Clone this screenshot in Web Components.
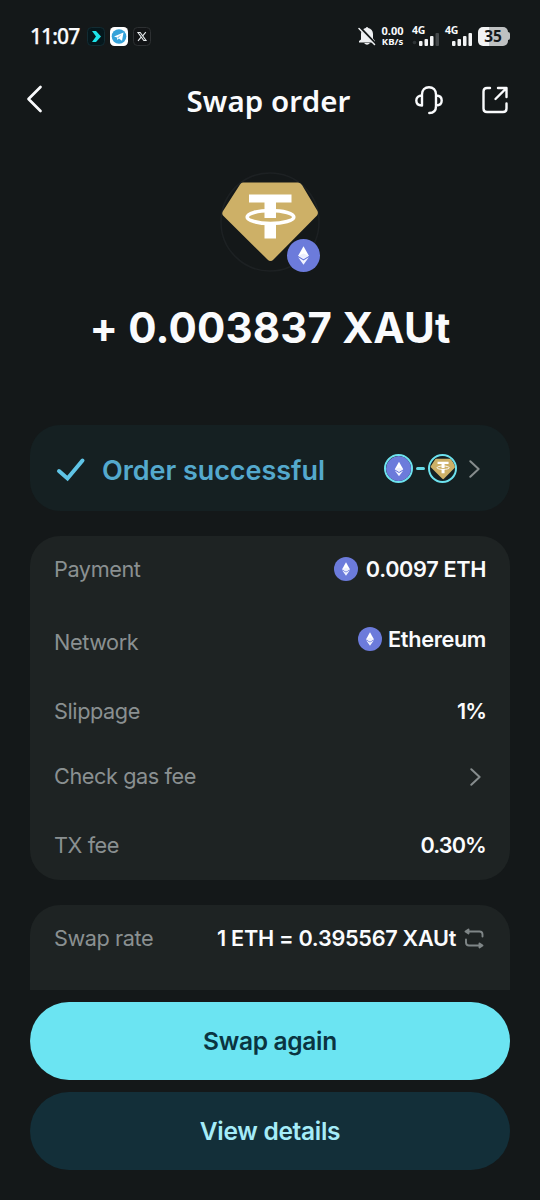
<!DOCTYPE html>
<html lang="en">
<head>
<meta charset="utf-8">
<title>Swap order</title>
<style>
html,body{margin:0;background:#141819}
body{width:540px;height:1200px;overflow:hidden;font-family:Inter,"Liberation Sans",sans-serif;color:#fafbfd}
</style>
</head>
<body>
<swap-page></swap-page>
<script>
const define = (name, html) => customElements.define(name, class extends HTMLElement {
  constructor() {
    super();
    const t = document.createElement('template');
    t.innerHTML = html;
    this.attachShadow({mode: 'open'}).append(t.content.cloneNode(true));
  }
});

define('eth-coin', `<style>:host{display:block;width:24px;height:24px;flex:none}svg{display:block;width:100%;height:100%}</style>
<svg viewBox="0 0 24 24"><circle cx="12" cy="12" r="12" fill="#6c7bdb"/><path d="M12 5.2 8.1 12.2 12 14.6 15.9 12.2Z" fill="#fff"/><path d="M8.1 13.3 12 15.6 15.9 13.3 12 18.8Z" fill="#f1f3ff"/><path d="M8.1 12.2 12 10.6 15.9 12.2 12 14.6Z" fill="#eceefd"/></svg>`);

define('gold-coin', `<style>:host{display:block;width:100px;height:100px;flex:none}svg{display:block;width:100%;height:100%}</style>
<svg viewBox="0 0 100 100"><circle cx="50" cy="50" r="49" fill="none" stroke="#1d2123" stroke-width="1.5"/>
<path d="M23 10.5H78Q80.500 10.500 82 13L97.500 39Q98.500 41.500 97 43.500L53.500 87.500Q50.500 90.500 47.500 87.500L3 43.500Q1.500 41.500 3 39L20 12.500Q21.300 10.500 23 10.500Z" fill="#cdb067"/>
<path d="M29 22.500H71.500V30.500H56V46H44.500V30.500H29Z" fill="#fff"/><path d="M44.500 50H56V66.500H44.500Z" fill="#fff"/>
<ellipse cx="50.500" cy="45" rx="23.300" ry="6.500" fill="none" stroke="#fff" stroke-width="3.600"/></svg>`);

define('chevron-right', `<style>:host{display:block;width:11px;height:18px}svg{display:block}</style>
<svg width="11" height="18" viewBox="0 0 11 18" fill="none" stroke="#868c8d" stroke-width="2" stroke-linecap="round" stroke-linejoin="round"><path d="M1.300 1.200 9.600 9 1.300 16.800"/></svg>`);

define('status-bar', `<style>
:host{display:flex;height:72px;box-sizing:border-box;padding:0 30px 0 30px;align-items:center;font-family:"Noto Sans",sans-serif}
svg{display:block;flex:none}
.time{font-size:21px;font-weight:500;line-height:28px;width:57px;letter-spacing:-.9px;white-space:nowrap;-webkit-text-stroke:.25px currentColor}
.apps{display:flex;gap:5px}
.right{margin-left:auto;display:flex;align-items:center}
.speed{font-size:11px;line-height:11px;font-weight:700;text-align:center;width:25px;margin:0 7px 0 4px;white-space:nowrap}
.speed div{height:11px}
.speed div+div{font-size:9.500px;letter-spacing:0}
.sig{width:28px;height:22px;display:grid}
.sig>*{grid-area:1/1}
.sig span{font-size:10.500px;font-weight:700;line-height:10px;letter-spacing:-.3px}
.sig svg{align-self:end}
.bat{display:flex;align-items:center}
.bat b{width:30px;height:19px;border-radius:5px;background:linear-gradient(90deg,#f2f3f4 35%,#bfc1c2 35%);color:#15181a;font-size:15.500px;line-height:19px;text-align:center}
.bat i{width:2px;height:8px;border-radius:0 2px 2px 0;background:#bfc1c2}
</style>
<span class="time">11:07</span>
<span class="apps">
<svg width="18" height="19" viewBox="0 0 18 19"><rect x=".5" y=".5" width="17" height="18" rx="4" fill="#05171c" stroke="#122c33"/><path d="M5 4H9L14 9.500 9 15H5L9 9.500Z" fill="#1ce4ea"/></svg>
<svg width="18" height="19" viewBox="0 0 18 19"><rect width="18" height="19" rx="4.500" fill="#fff"/><circle cx="9" cy="9.500" r="7.300" fill="#35a2d9"/><path d="M4 9.500 13.500 5.600 12 13.800 8.800 11.500 7.300 13 7 10.500Z" fill="#fff"/><path d="M7 10.500 11.500 7.600 8.300 11Z" fill="#78bfe3"/></svg>
<svg width="18" height="19" viewBox="0 0 18 19"><rect x=".5" y=".5" width="17" height="18" rx="4" fill="#121416" stroke="#2d3032"/><path d="M5 5.500H7.200L13 13.500H10.800ZM12.800 5.200 9.700 8.800M8.200 10.200 5 13.800" fill="none" stroke="#e9edef" stroke-width="1.100"/></svg>
</span>
<span class="right">
<svg width="18" height="20" viewBox="0 0 18 20"><path d="M3 13.500V8C3 4.500 5 2.500 7.700 2Q9 0 10.300 2C13 2.500 15 4.500 15 8V12.500L17 15V16.500H1V15Z" fill="#eef0f2"/><path d="M6 17H12Q9 20.500 6 17Z" fill="#eef0f2"/><path d="M1.800 1.500 17 17.500" stroke="#141819" stroke-width="2.600"/><path d="M1 2.500 16.500 18.500" stroke="#eef0f2" stroke-width="1.500" stroke-linecap="round"/></svg>
<div class="speed"><div>0.00</div><div>KB/s</div></div>
<div class="sig" style="width:33px"><span>4G</span><svg width="28" height="15" viewBox="0 0 28 15"><g fill="#f3f4f5"><rect x="7" y="9" width="3.500" height="5" rx="1"/><rect x="12.500" y="7" width="3.500" height="7" rx="1"/><rect x="18" y="4" width="3.500" height="10" rx="1"/></g><rect x="23.500" y="1" width="3.500" height="13" rx="1" fill="#44484a"/><circle cx="2.500" cy="10.500" r="1.800" fill="#303537"/></svg></div>
<div class="sig" style="width:33px"><span>4G</span><svg width="28" height="15" viewBox="0 0 28 15"><g fill="#f3f4f5"><rect x="7" y="9" width="3.500" height="5" rx="1"/><rect x="12.500" y="7" width="3.500" height="7" rx="1"/><rect x="18" y="4" width="3.500" height="10" rx="1"/><rect x="23.500" y="1" width="3.500" height="13" rx="1"/></g></svg></div>
<div class="bat"><b>35</b><i></i></div>
</span>`);

define('page-header', `<style>
:host{display:grid;grid-template-columns:1fr auto 1fr;align-items:center;height:56px;padding:0 31px 0 28px}
h1{margin:2px 0 0;font:600 29.500px/40px "Noto Sans",sans-serif;white-space:nowrap;letter-spacing:.1px}
svg{display:block;fill:none;stroke:#fafbfd;stroke-width:2.400;stroke-linecap:round;stroke-linejoin:round}
.back{margin:-2px 0 0 -2px;stroke-width:2.700}
.acts{display:flex;gap:37px;justify-content:flex-end}
</style>
<svg class="back" width="18" height="28" viewBox="0 0 18 28"><path d="M14.500 2 2.500 14 14.500 26"/></svg>
<h1><slot></slot></h1>
<div class="acts">
<svg width="30" height="30" viewBox="0 0 30 30"><path d="M8 20.500V9.500C8 5 11 2.200 15 2.200S22 5 22 9.500V21C22 25.500 19.500 28 15.300 28M8 10.500C4.500 10.500 2.300 12.500 2.300 15.500S4.500 20.500 8 20.500M22 10.500C25.500 10.500 27.700 12.500 27.700 15.500S25.500 20.500 22 20.500"/></svg>
<svg width="28" height="30" viewBox="0 0 28 30"><path d="M9 3H6Q2.500 3 2.500 6.500V23.500Q2.500 27 6 27H22Q25.500 27 25.500 23.500V18.500M17 3H25.500V12M25 3.500 14.500 14"/></svg>
</div>`);

define('token-hero', `<style>
:host{display:flex;flex-direction:column;align-items:center;padding-top:44px;height:297px;box-sizing:border-box}
.coin{width:100px;height:100px;position:relative}
.coin eth-coin{position:absolute;width:33px;height:33px;left:66.500px;top:66.500px}
.amt{margin-top:30px;font-size:42px;line-height:52px;font-weight:700;white-space:nowrap;letter-spacing:.15px}
</style><div class="coin"><gold-coin></gold-coin><eth-coin></eth-coin></div><div class="amt"><slot></slot></div>`);

define('order-status', `<style>
:host{display:flex;align-items:center;height:86px;margin:0 30px;border-radius:30px;background:#152022;padding:0 30px 0 26px;box-sizing:border-box}
.txt{font-size:27px;line-height:34px;font-weight:600;color:#54a9cd;margin:6px auto 0 16px;white-space:nowrap;letter-spacing:-.05px}
svg{display:block;margin-top:1px}
.ring{width:29px;height:29px;border-radius:50%;border:2.500px solid #6de2ef;box-sizing:border-box;overflow:hidden;display:grid;place-items:center}
.ring eth-coin{width:26px;height:26px}.ring gold-coin{width:26px;height:26px}
.dash{width:9px;height:3px;border-radius:2px;background:#66d9e6;margin:0 3px}
chevron-right{margin-left:12px;margin-top:1px}
</style>
<svg width="30" height="26" viewBox="0 0 30 26"><path d="M3 15 11.500 22.500 26.500 4.500" fill="none" stroke="#5fc4e6" stroke-width="4" stroke-linecap="round"/></svg>
<span class="txt"><slot></slot></span>
<span class="ring"><eth-coin></eth-coin></span><span class="dash"></span><span class="ring"><gold-coin></gold-coin></span><chevron-right></chevron-right>`);

define('info-card', `<style>:host{display:block;box-sizing:border-box;margin:25px 30px 0;border-radius:30px;background:#1e2323;overflow:hidden}:host([clipped]){border-radius:30px 30px 0 0;height:85px}</style><slot></slot>`);

define('info-row', `<style>
:host{display:flex;align-items:center;justify-content:space-between;padding:0 24px;font-size:21.700px;line-height:28px;white-space:nowrap;box-sizing:border-box}
.l{color:#8a9091;letter-spacing:-.42px}
.v{display:flex;align-items:center;gap:var(--gap,8px);font-weight:600;margin-bottom:var(--lift,0);letter-spacing:var(--vs,-.35px)}
</style><span class="l"><slot name="label"></slot></span><span class="v"><slot></slot></span>`);

define('swap-icon', `<style>:host{display:block}svg{display:block}</style><svg width="22" height="22" viewBox="0 0 22 22" fill="none" stroke="#7f8687" stroke-width="1.900" stroke-linejoin="round" stroke-linecap="round"><path d="M4 4.500H15.500Q18.500 4.500 18.500 7.500V9.500M17 18.500H5Q2 18.500 2 15.500V12.500"/><path d="M4.500 2.500 1.500 4.500 4.500 6.500ZM15.500 16.500 18.500 18.500 15.500 20.500Z" fill="#7f8687"/></svg>`);

define('pill-button', `<style>
:host{display:block;margin:12px 30px 0}
button{display:block;width:100%;height:78px;border:0;border-radius:39px;font:600 24.500px/30px Inter,sans-serif;letter-spacing:-.3px;background:#132f39;color:#a5ecf8;padding:0}
:host([primary]) button{background:#6be4f2;color:#0a3441}
</style><button><slot></slot></button>`);

define('swap-page', `<style>:host{display:block;width:540px;height:1200px;overflow:hidden;background:#141819}</style>
<status-bar></status-bar>
<page-header>Swap order</page-header>
<token-hero>+ 0.003837 XAUt</token-hero>
<order-status>Order successful</order-status>
<info-card>
<info-row style="height:67px;padding-bottom:1px"><span slot="label">Payment</span><eth-coin></eth-coin><span>0.0097 ETH</span></info-row>
<info-row style="height:78px;--lift:6px;--gap:6px"><span slot="label">Network</span><eth-coin></eth-coin><span>Ethereum</span></info-row>
<info-row style="height:60px;--vs:-1px"><span slot="label">Slippage</span><span>1%</span></info-row>
<info-row style="height:70px"><span slot="label">Check gas fee</span><chevron-right style="margin:2px 5px 0 0"></chevron-right></info-row>
<info-row style="height:69px;--vs:-.9px;padding-bottom:1px"><span slot="label">TX fee</span><span>0.30%</span></info-row>
</info-card>
<info-card clipped><info-row style="height:67px;padding-bottom:1px;--vs:-.3px"><span slot="label">Swap rate</span><span>1 ETH = 0.395567 XAUt</span><swap-icon></swap-icon></info-row></info-card>
<pill-button primary>Swap again</pill-button>
<pill-button>View details</pill-button>`);
</script>
</body>
</html>
